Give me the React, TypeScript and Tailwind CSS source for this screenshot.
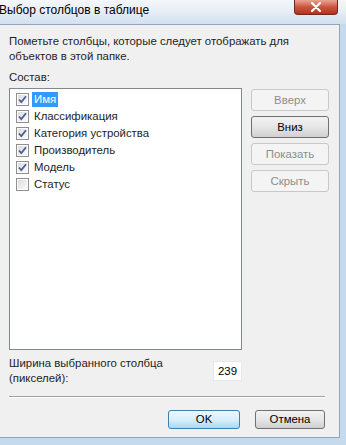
import React from 'react';

const items = [
  { label: 'Имя', checked: true, selected: true },
  { label: 'Классификация', checked: true },
  { label: 'Категория устройства', checked: true },
  { label: 'Производитель', checked: true },
  { label: 'Модель', checked: true },
  { label: 'Статус', checked: false },
];

function Check({ checked }: { checked: boolean }) {
  return (
    <span className="relative flex h-[13px] w-[13px] shrink-0 items-center justify-center border border-[#8e8f8f] bg-white">
      <span className="absolute inset-[1px] bg-gradient-to-br from-[#dcdcdc] to-[#fbfbfb]" />
      {checked && (
        <svg className="relative" width="9" height="9" viewBox="0 0 9 9">
          <path d="M1 4.5 L3.3 7 L8 1.2" fill="none" stroke="#4a5f97" strokeWidth="1.8" />
        </svg>
      )}
    </span>
  );
}

function SideButton({ label, disabled }: { label: string; disabled?: boolean }) {
  return (
    <div
      className={
        disabled
          ? 'flex h-[22px] w-[78px] items-center justify-center rounded-[3px] border border-[#c5c9cc] bg-[#f4f4f4] text-[#8d8d8d]'
          : 'flex h-[22px] w-[78px] items-center justify-center rounded-[3px] border border-[#707070] bg-gradient-to-b from-[#f2f2f2] via-[#e6e6e6] to-[#d0d0d0] text-black'
      }
    >
      {label}
    </div>
  );
}

export default function App() {
  return (
    <div
      className="flex h-[445px] w-[346px] flex-col overflow-hidden bg-[#c6daee] text-[11.4px] leading-[15px]"
      style={{ fontFamily: '"Liberation Sans", "Noto Sans", sans-serif' }}
    >
      {/* title bar */}
      <div className="relative flex h-[24px] shrink-0 items-center bg-gradient-to-b from-[#f4f7fb] via-[#e6edf5] to-[#d2e0ee] pb-[3px]">
        <span className="-ml-[1px] text-[12px] text-black">Выбор столбцов в таблице</span>
        <div className="absolute right-[8px] top-0 flex h-[15px] w-[44px] items-center justify-center rounded-b-[4px] border border-t-0 border-[#6b2a22] bg-gradient-to-b from-[#e8a493] via-[#c9553e] to-[#b8311c]">
          <svg width="12" height="10" viewBox="0 0 12 10">
            <path d="M2 1 L10 9 M10 1 L2 9" stroke="#fff" strokeWidth="2.2" strokeLinecap="round" />
          </svg>
        </div>
      </div>

      {/* client area */}
      <div className="mb-[7px] mr-[6px] flex flex-1 flex-col border border-l-0 border-[#8fa6bf] bg-[#f0f0f0] pl-[9px] pr-[10px]">
        <p className="mt-[9px] text-[#1e1e1e]">
          Пометьте столбцы, которые следует отображать для
          <br />
          объектов в этой папке.
        </p>
        <p className="mt-[6px] text-[#1e1e1e]">Состав:</p>

        <div className="mt-[3px] flex gap-[9px]">
          <div className="flex h-[262px] w-[234px] flex-col border border-[#828790] bg-white pl-[6px] pt-[2px]">
            {items.map((it) => (
              <div key={it.label} className="flex h-[17px] items-center gap-[3px]">
                <Check checked={it.checked} />
                <span
                  className={
                    it.selected
                      ? 'bg-[#3399ff] px-[2px] text-white'
                      : 'px-[2px] text-[#1e1e1e]'
                  }
                >
                  {it.label}
                </span>
              </div>
            ))}
          </div>
          <div className="mt-[1px] flex flex-col gap-[5px]">
            <SideButton label="Вверх" disabled />
            <SideButton label="Вниз" />
            <SideButton label="Показать" disabled />
            <SideButton label="Скрыть" disabled />
          </div>
        </div>

        <div className="mt-[6px] flex items-start justify-between pr-[87px]">
          <p className="text-[#1e1e1e]">
            Ширина выбранного столбца
            <br />
            (пикселей):
          </p>
          <div className="mt-[5px] flex h-[20px] w-[29px] items-center justify-center border border-[#e3e9ef] bg-white text-black">
            239
          </div>
        </div>

        <div className="mt-[10px] h-[2px] w-[316px] border-t border-b border-t-[#a0a0a0] border-b-white" />

        <div className="mt-[12px] flex justify-end gap-[15px] pr-[4px]">
          <div className="flex h-[19px] w-[72px] items-center justify-center rounded-[3px] border border-[#3c7fb1] bg-gradient-to-b from-[#eaf6fd] via-[#d9f0fc] to-[#a7d9f5] text-black">
            OK
          </div>
          <div className="flex h-[19px] w-[70px] items-center justify-center rounded-[3px] border border-[#707070] bg-gradient-to-b from-[#f2f2f2] via-[#e6e6e6] to-[#d0d0d0] text-black">
            Отмена
          </div>
        </div>
      </div>
    </div>
  );
}
